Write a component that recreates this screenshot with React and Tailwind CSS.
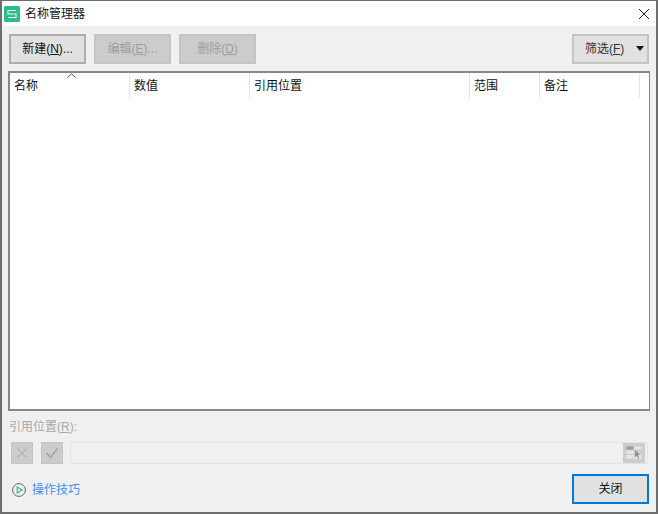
import React from "react";

const font = { };

function Btn({ children, disabled, className = "" }) {
  return (
    <div className={`w-[77px] h-[30px] flex items-center justify-center border-2 text-[12px] ${disabled ? "bg-[#cccccc] border-[#c4c4c4] text-[#9c9c9c]" : "bg-[#e1e1e1] border-[#adadad] text-[#111111]"} ${className}`}>
      {children}
    </div>
  );
}

function Head({ w, label, pl = "pl-[5px]" }) {
  return (
    <div className={`h-full ${pl} flex items-center border-r border-[#e5e5e5] text-[12px] text-[#111111] shrink-0 ${w}`}>
      {label}
    </div>
  );
}

export default function App() {
  return (
    <div className="w-[658px] h-[514px] flex flex-col bg-[#f0f0f0] border-x-2 border-b-2 border-t border-[#6e6e6e] font-['Liberation_Sans','Noto_Sans_CJK_SC',sans-serif] overflow-hidden">
      <div className="h-[25px] bg-white flex items-center justify-between shrink-0 pl-[2px] pr-[6px]">
        <div className="flex items-center gap-[5px]">
          <svg width="16" height="16" viewBox="0 0 16 16">
            <rect width="16" height="16" rx="1.5" fill="#2dbd86" />
            <path d="M4 4.5h8M4 4.5v3.5h8v3.5H4" fill="none" stroke="#fff" strokeWidth="1.1" opacity="0.9" />
          </svg>
          <span className="text-[12px] text-[#111111]">名称管理器</span>
        </div>
        <svg width="12" height="12" viewBox="0 0 12 12">
          <path d="M1 1l10 10M11 1L1 11" stroke="#222" strokeWidth="1" fill="none" />
        </svg>
      </div>

      <div className="flex-1 flex flex-col pt-[8px] pl-[6px] pr-[7px]">
        <div className="flex justify-between h-[30px] pl-[1px] shrink-0">
          <div className="flex gap-[8px]">
            <Btn>新建(<span className="underline">N</span>)...</Btn>
            <Btn disabled>编辑(<span className="underline">E</span>)...</Btn>
            <Btn disabled>删除(<span className="underline">D</span>)</Btn>
          </div>
          <div className="relative w-[77px] h-[30px] border-2 border-[#c4c4c4] bg-[#e1e1e1] text-[12px] text-[#333333] flex items-center pl-[11px]">
            筛选(<span className="underline">F</span>)
            <svg className="absolute right-[3px] top-[10px]" width="8" height="5" viewBox="0 0 8 5">
              <path d="M0 0h8L4 5z" fill="#111" />
            </svg>
          </div>
        </div>

        <div className="relative mt-[7px] h-[340px] bg-white border-2 border-[#86868c] border-r-[1px] shrink-0 mr-[-1px] w-[642px]">
          <div className="flex h-[25px]">
            <Head w="w-[120px]" label="名称" pl="pl-[4px]" />
            <Head w="w-[120px]" label="数值" pl="pl-[4px]" />
            <Head w="w-[220px]" label="引用位置" pl="pl-[4px]" />
            <Head w="w-[70px]" label="范围" pl="pl-[4px]" />
            <Head w="w-[100px]" label="备注" pl="pl-[4px]" />
          </div>
          <svg className="absolute left-[57px] top-[0px]" width="9" height="5" viewBox="0 0 9 5">
            <path d="M0.5 4.5L4.5 0.8l4 3.7" fill="none" stroke="#555" strokeWidth="1" />
          </svg>
        </div>

        <div className="mt-[9px] h-[14px] pl-[1px] flex items-center text-[12px] text-[#a8a8a8] shrink-0">
          引用位置(<span className="underline">R</span>):
        </div>

        <div className="mt-[8px] h-[22px] flex items-center pl-[3px] shrink-0">
          <div className="w-[22px] h-[22px] bg-[#cccccc] border border-[#c4c4c4] flex items-center justify-center">
            <svg width="12" height="12" viewBox="0 0 12 12">
              <path d="M1.5 1.5l9 9M10.5 1.5l-9 9" stroke="#b4b4b4" strokeWidth="1.2" fill="none" />
            </svg>
          </div>
          <div className="ml-[8px] w-[22px] h-[22px] bg-[#cccccc] border border-[#c4c4c4] flex items-center justify-center">
            <svg width="14" height="12" viewBox="0 0 14 12">
              <path d="M1.5 6l4 4.5L12.5 1.5" stroke="#a6a6a6" strokeWidth="1.8" fill="none" />
            </svg>
          </div>
          <div className="ml-[7px] w-[578px] h-[22px] bg-[#f0f0f0] border border-[#e3e3e3] flex items-center justify-end pr-[2px]">
            <div className="w-[22px] h-[20px] bg-[#cccccc] flex items-center justify-center">
              <svg width="16" height="14" viewBox="0 0 16 14">
                <rect x="0.5" y="0.5" width="7" height="3" fill="#9a9a9a" />
                <rect x="0.5" y="4.5" width="7" height="3.5" fill="#e6e6e6" />
                <rect x="0.5" y="9" width="7" height="4" fill="#e6e6e6" />
                <rect x="8.5" y="0.5" width="7" height="3" fill="#e6e6e6" />
                <rect x="8.5" y="9" width="7" height="4" fill="#e6e6e6" />
                <path d="M9 4l5 5-2 .3 1.2 3-1 .5-1.2-3L9 11z" fill="#8e8e8e" />
              </svg>
            </div>
          </div>
        </div>

        <div className="mt-[10px] flex items-center justify-between h-[30px] shrink-0">
          <div className="flex items-center pl-[4px] pt-[1px]">
            <svg width="14" height="14" viewBox="0 0 14 14">
              <circle cx="7" cy="7" r="6.4" fill="none" stroke="#555" strokeWidth="0.9" />
              <path d="M5.2 4v6L10 7z" fill="none" stroke="#2dbd86" strokeWidth="1.1" />
            </svg>
            <span className="ml-[6px] text-[12px] text-[#3d8fee]">操作技巧</span>
          </div>
          <div className="w-[77px] h-[30px] bg-[#e1e1e1] border-2 border-[#0078d7] flex items-center justify-center text-[12px] text-[#111111]">
            关闭
          </div>
        </div>
      </div>
    </div>
  );
}
